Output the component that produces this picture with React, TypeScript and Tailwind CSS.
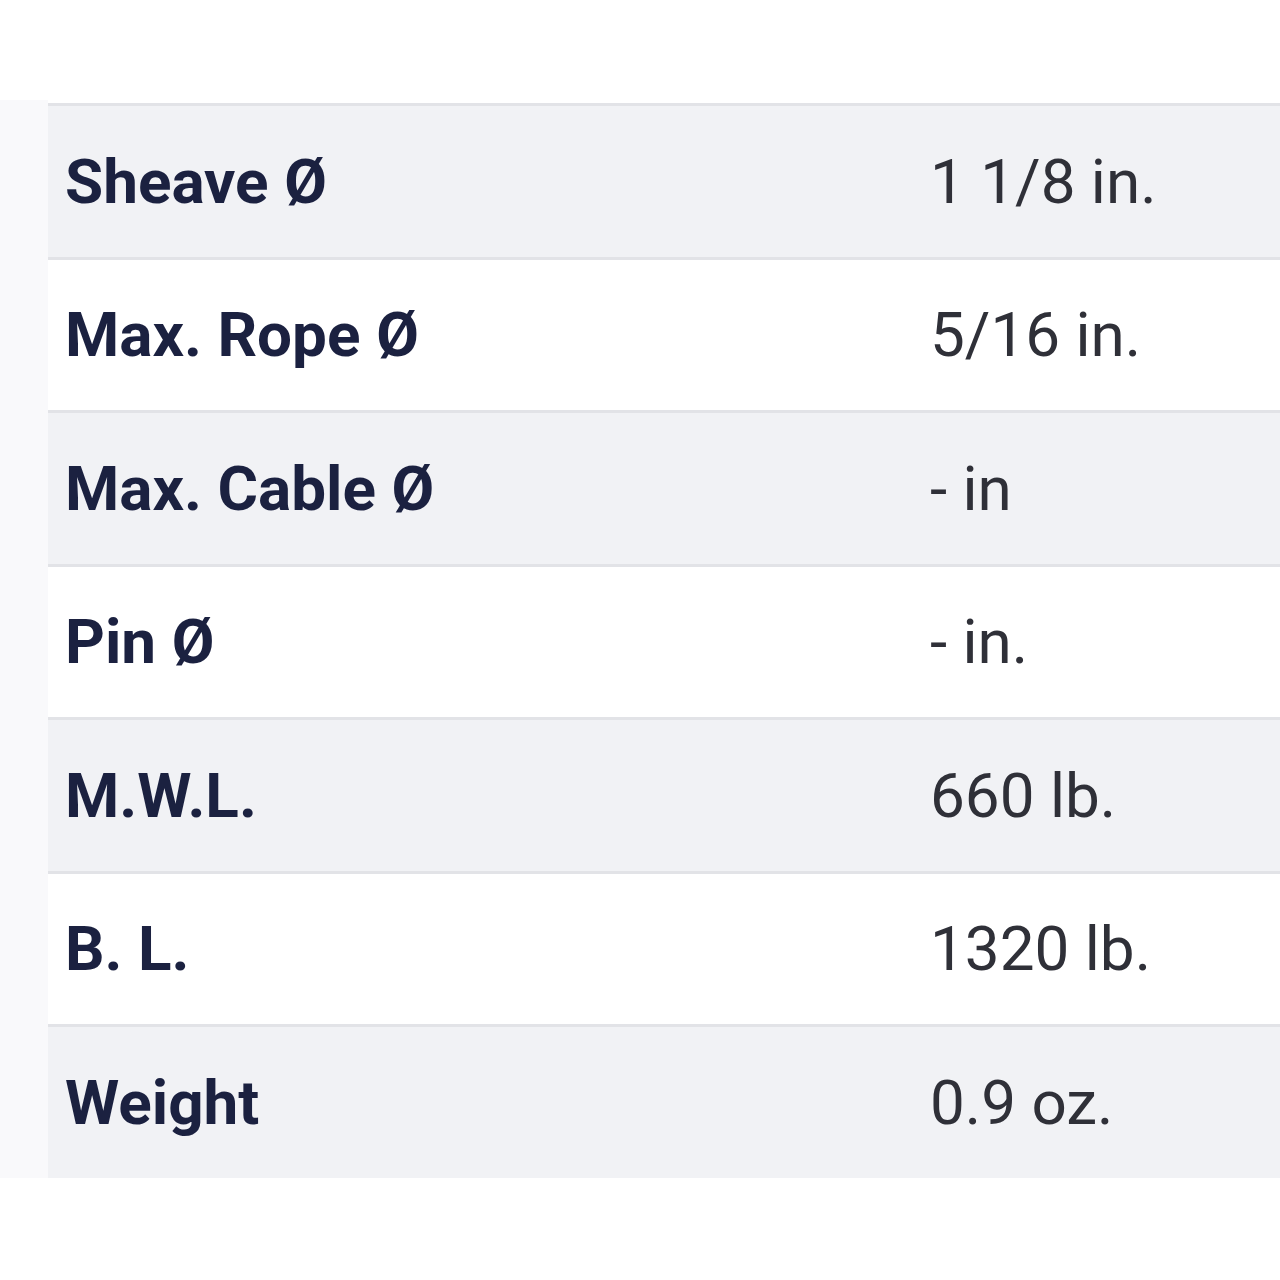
const specs = [
  { label: "Sheave Ø", value: "1 1/8 in." },
  { label: "Max. Rope Ø", value: "5/16 in." },
  { label: "Max. Cable Ø", value: "- in" },
  { label: "Pin Ø", value: "- in." },
  { label: "M.W.L.", value: "660 lb." },
  { label: "B. L.", value: "1320 lb." },
  { label: "Weight", value: "0.9 oz." },
];

export default function App() {
  return (
    <div className="h-[1280px] w-[1280px] bg-white pt-[100px] font-['Roboto',sans-serif]">
      <div className="flex">
        <div className="w-[48px] bg-[#f9f9fb]" />
        <div className="flex-1 pt-[3px]">
          {specs.map((s, i) => (
            <div
              key={s.label}
              className={`flex h-[153.5px] items-center border-t-[3px] border-[#e2e3e7] ${
                i % 2 === 0 ? "bg-[#f1f2f5]" : "bg-white"
              }`}
            >
              <div className="w-[882px] pl-[17px] text-[62px] font-bold text-[#1b2140]">
                {s.label}
              </div>
              <div className="text-[62px] font-normal text-[#2f3038]">{s.value}</div>
            </div>
          ))}
        </div>
      </div>
    </div>
  );
}
